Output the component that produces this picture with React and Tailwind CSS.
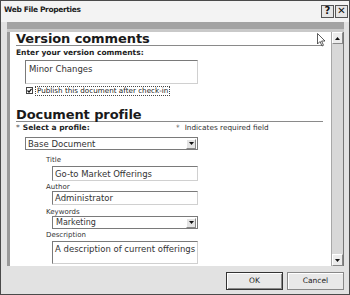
export default function App() {
    const font = { fontFamily: '"DejaVu Sans", Verdana, sans-serif' };
    return (
        <div className="relative w-[350px] h-[295px] bg-[#e2e2e2] border border-[#4a4a4a] flex flex-col overflow-hidden text-[#111]" style={font}>
            {/* Title bar */}
            <div className="h-[21px] bg-[#f3f3f3] flex items-center justify-between pl-[3px] pr-[1px] shrink-0">
                <span className="text-[7.5px] font-bold tracking-[-0.35px] text-[#222] -mt-[3px]">Web File Properties</span>
                <div className="flex gap-[1px] -mt-[1px]">
                    <div className="w-[13px] h-[13px] bg-[#e6e6e6] border border-[#555] flex items-center justify-center text-[10px] font-bold leading-none">?</div>
                    <div className="w-[13px] h-[13px] bg-[#e6e6e6] border border-[#555] flex items-center justify-center text-[10px] font-bold leading-none">✕</div>
                </div>
            </div>

            {/* Panel */}
            <div className="flex-1 flex flex-col ml-[6px] mr-[5px] min-h-0">
                <div className="h-[7px] bg-[#a3a3a3] shrink-0" />
                <div className="h-[3px] bg-[#c9c9c9] shrink-0" />
                <div className="flex-1 flex min-h-0 border-l-[3px] border-[#9a9a9a]">
                    {/* Content */}
                    <div className="flex-1 bg-white pl-[6px] pr-[8px] overflow-hidden">
                        <div className="text-[13px] font-bold leading-[12px] mt-[1px] tracking-[-0.1px] text-[#1a1a1a]">Version comments</div>
                        <div className="h-px bg-[#8a8a8a]" />
                        <div className="text-[7.5px] font-bold mt-[3px] leading-[8px] text-[#222]">Enter your version comments:</div>
                        <div className="ml-[9px] mt-[3px] w-[173px] h-[24px] border border-[#7a7a7a] border-r-[#d0d0d0] border-b-[#d0d0d0] text-[8.5px] pl-[3px] pt-[3px] leading-[10px] text-[#333]">Minor Changes</div>
                        <div className="flex items-center ml-[10px] mt-[2px] h-[9px]">
                            <div className="w-[7px] h-[7px] border border-[#444] flex items-center justify-center">
                                <svg width="5" height="5" viewBox="0 0 5 5"><path d="M0.5 2.5 L2 4 L4.5 0.8" stroke="#111" strokeWidth="1.2" fill="none" /></svg>
                            </div>
                            <span className="ml-[2px] text-[7.2px] leading-[8px] border border-dotted border-[#444] px-[1px] text-[#222]">Publish this document after check-in</span>
                        </div>
                        <div className="text-[13px] font-bold leading-[12px] mt-[14px] tracking-[-0.1px] text-[#1a1a1a]">Document profile</div>
                        <div className="h-px bg-[#8a8a8a]" />
                        <div className="flex items-center mt-[2px] leading-[8px]">
                            <span className="text-[7.5px] font-bold text-[#222] w-[160px]"><span className="text-[#555] font-normal mr-[3px]">*</span>Select a profile:</span>
                            <span className="text-[7.3px] text-[#333]"><span className="text-[#555] mr-[5px]">*</span>Indicates required field</span>
                        </div>
                        <div className="ml-[9px] mt-[5px] w-[173px] h-[13px] border border-[#7a7a7a] flex items-center text-[8.5px] text-[#333]">
                            <span className="flex-1 pl-[2px] leading-[10px]">Base Document</span>
                            <Arrow />
                        </div>
                        <div className="ml-[30px]">
                            <Label text="Title" mt="mt-[6px]" />
                            <Field text="Go-to Market Offerings" mt="mt-[2px]" h="h-[15px]" />
                            <Label text="Author" mt="mt-[2px]" />
                            <Field text="Administrator" mt="mt-0" h="h-[14px]" />
                            <Label text="Keywords" mt="mt-[3px]" />
                            <div className="ml-[6px] w-[146px] h-[13px] border border-[#7a7a7a] flex items-center text-[8px] text-[#333]">
                                <span className="flex-1 pl-[3px] leading-[10px]">Marketing</span>
                                <Arrow />
                            </div>
                            <Label text="Description" mt="mt-[2px]" />
                            <div className="ml-[6px] mt-[2px] w-[146px] h-[23px] border border-[#7a7a7a] border-r-[#d0d0d0] border-b-[#d0d0d0] text-[8.5px] pl-[2px] pt-[2px] leading-[10px] text-[#333]">A description of current offerings</div>
                        </div>
                    </div>
                    {/* Scrollbar */}
                    <div className="w-[13px] bg-[#d8d8d8] border-l border-r border-l-[#a8a8a8] border-r-[#777] flex flex-col justify-between">
                        <div className="h-[12px] bg-[#ececec] border border-[#888] border-t-white border-l-white flex items-center justify-center">
                            <svg width="5" height="3" viewBox="0 0 5 3"><path d="M0 3 L2.5 0 L5 3 Z" fill="#111" /></svg>
                        </div>
                        <div className="h-[12px] bg-[#ececec] border border-[#888] border-t-white border-l-white flex items-center justify-center">
                            <svg width="5" height="3" viewBox="0 0 5 3"><path d="M0 0 L2.5 3 L5 0 Z" fill="#111" /></svg>
                        </div>
                    </div>
                </div>
            </div>

            {/* Buttons */}
            <div className="h-[28px] shrink-0 flex items-start pt-[6px] justify-end gap-[4px] pr-[5px]">
                <button className="w-[57px] h-[18px] bg-[#e8e8e8] border border-[#333] shadow-[inset_1px_1px_0_#fff,inset_-1px_-1px_0_#888] text-[7.5px] text-[#222]" style={font}>OK</button>
                <button className="w-[57px] h-[18px] bg-[#e8e8e8] border border-[#888] shadow-[inset_1px_1px_0_#fff] text-[7.5px] text-[#222]" style={font}>Cancel</button>
            </div>

            {/* Mouse cursor */}
            <svg className="absolute left-[316px] top-[32px]" width="9" height="14" viewBox="0 0 9 14">
                <path d="M0.5 0.5 L0.5 11 L3 8.5 L5 13 L6.5 12.3 L4.6 8 L8 8 Z" fill="#fff" stroke="#333" strokeWidth="0.8" />
            </svg>
        </div>
    );
}

function Arrow() {
    return (
        <div className="w-[10px] h-[10px] mr-[1px] bg-[#e4e4e4] border border-[#888] border-t-white border-l-white flex items-center justify-center">
            <svg width="5" height="3" viewBox="0 0 5 3"><path d="M0 0 L2.5 3 L5 0 Z" fill="#111" /></svg>
        </div>
    );
}

function Label({ text, mt }) {
    return <div className={`${mt} text-[7px] leading-[8px] text-[#333]`}>{text}</div>;
}

function Field({ text, mt, h }) {
    return (
        <div className={`${mt} ${h} ml-[6px] w-[146px] border border-[#7a7a7a] border-r-[#d0d0d0] border-b-[#d0d0d0] flex items-center text-[8.5px] pl-[2px] text-[#333] leading-[10px]`}>{text}</div>
    );
}
